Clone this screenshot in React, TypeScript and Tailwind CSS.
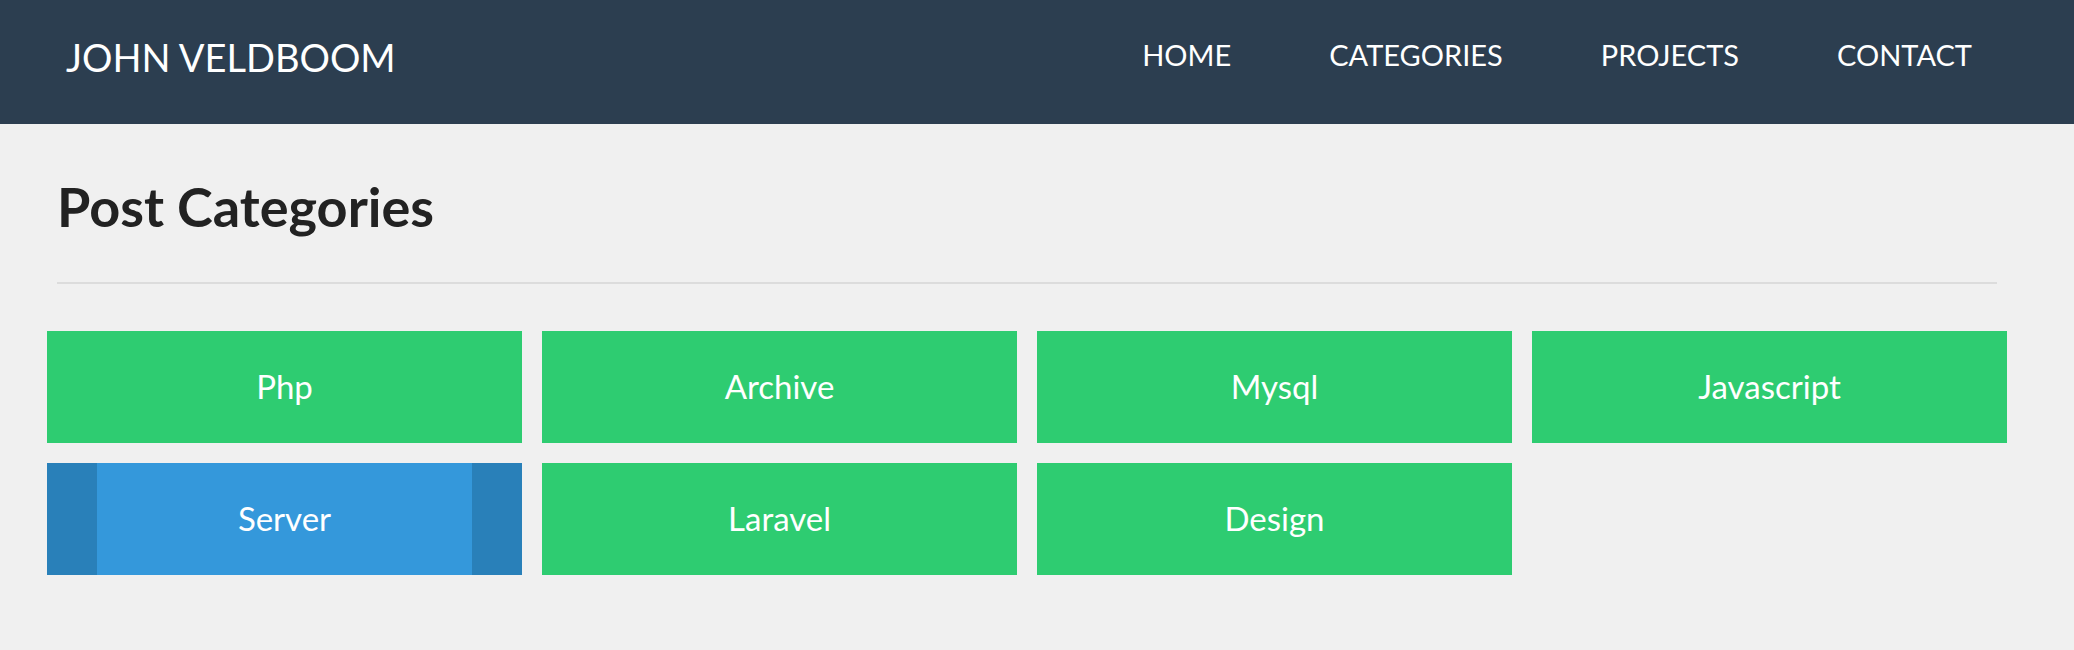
import * as React from "react"

const categories = [
  { name: "Php", active: false },
  { name: "Archive", active: false },
  { name: "Mysql", active: false },
  { name: "Javascript", active: false },
  { name: "Server", active: true },
  { name: "Laravel", active: false },
  { name: "Design", active: false },
]

const links = ["HOME", "CATEGORIES", "PROJECTS", "CONTACT"]

export default function App() {
  return (
    <div className="min-h-screen bg-[#f0f0f0] font-['Lato',sans-serif]">
      <header className="h-[124px] bg-[#2c3e50] flex items-start justify-between pl-[66px] pr-[102px] pt-[38px]">
        <a className="text-[38px] leading-none text-white">JOHN VELDBOOM</a>
        <nav className="flex gap-[98px] pt-[2px]">
          {links.map((l) => (
            <a key={l} className="text-[29px] leading-none text-white">
              {l}
            </a>
          ))}
        </nav>
      </header>

      <main className="pl-[47px]">
        <h1 className="mt-[56px] ml-[10px] text-[54px] leading-none font-bold text-[#222]">
          Post Categories
        </h1>
        <hr className="mt-[48px] ml-[10px] w-[1940px] border-0 border-t-2 border-[#dcdcdc]" />

        <div className="mt-[47px] w-[1960px] grid grid-cols-4 gap-[20px] pb-[75px]">
          {categories.map((c) => (
            <a
              key={c.name}
              className={
                c.active
                  ? "h-[112px] flex items-center justify-center bg-[#3498db] border-x-[50px] border-[#2980b9] text-white text-[33px]"
                  : "h-[112px] flex items-center justify-center bg-[#2ecc71] text-white text-[33px]"
              }
            >
              {c.name}
            </a>
          ))}
        </div>
      </main>
    </div>
  )
}
